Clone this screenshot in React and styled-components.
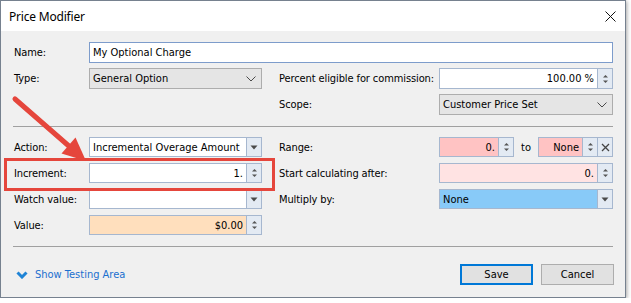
import React from 'react';
import styled, { createGlobalStyle } from 'styled-components';

const Global = createGlobalStyle`
  html, body { margin: 0; padding: 0; background: #ffffff; }
  body {
    font-family: "DejaVu Sans Condensed", "DejaVu Sans", sans-serif;
    font-size: 11px;
    color: #000;
  }
  * { box-sizing: border-box; }
`;

const Window = styled.div`
  position: relative;
  width: 626px;
  height: 298px;
  border: 1px solid #76818f;
  background: #f0f0f0;
  box-shadow: 1px 1px 4px rgba(0, 0, 0, 0.35);
  display: flex;
  flex-direction: column;
`;

const TitleBar = styled.div`
  height: 30px;
  flex: none;
  background: #ffffff;
  display: flex;
  align-items: center;
  justify-content: space-between;
  padding: 0 9px 0 8px;
`;

const Title = styled.span`
  font-family: "Noto Sans", "Open Sans", sans-serif;
  font-size: 12px;
  letter-spacing: -0.2px;
  color: #000;
`;

const Body = styled.div`
  flex: 1;
  display: flex;
  flex-direction: column;
  padding: 11px 11px 0 11px;
`;

const Grid = styled.div`
  display: grid;
  grid-template-columns: 77px 173px 177px 174px;
  grid-auto-rows: ${p => p.$rowH}px;
  row-gap: ${p => p.$gap}px;
`;

const Label = styled.div`
  display: flex;
  align-items: center;
  padding-left: ${p => (p.$right ? 17 : 2)}px;
  white-space: nowrap;
  letter-spacing: -0.1px;
`;

const Field = styled.div`
  display: flex;
  align-items: stretch;
  grid-column: ${p => p.$span || 'auto'};
  border: 1px solid ${p => p.$border || '#a6b7cf'};
  background: ${p => p.$bg || '#ffffff'};
  overflow: hidden;
`;

const FieldText = styled.div`
  flex: 1;
  display: flex;
  align-items: center;
  justify-content: ${p => (p.$right ? 'flex-end' : 'flex-start')};
  padding: 0 3px 0 3px;
  white-space: nowrap;
`;

const SideButton = styled.div`
  width: 15px;
  flex: none;
  display: flex;
  align-items: center;
  justify-content: center;
  background: #e3eaf3;
  border-left: 1px solid #a6b7cf;
  color: #4a4a4a;
`;

const Chevron = styled.div`
  width: 20px;
  flex: none;
  display: flex;
  align-items: center;
  justify-content: center;
`;

const Separator = styled.div`
  height: 1px;
  background: #a0a0a0;
  margin: ${p => p.$m};
  flex: none;
`;

const RangeCell = styled.div`
  display: flex;
  align-items: stretch;
`;

const RangeField = styled(Field)`
  width: ${p => (p.$w ? `${p.$w}px` : 'auto')};
  flex: ${p => (p.$w ? 'none' : '1')};
`;

const ToText = styled.div`
  width: 24px;
  display: flex;
  align-items: center;
  justify-content: center;
`;

const Footer = styled.div`
  display: flex;
  align-items: center;
  justify-content: space-between;
  height: 21px;
  margin-top: 17px;
  padding-left: 4px;
`;

const Link = styled.div`
  display: flex;
  align-items: center;
  gap: 7px;
  color: #1b6fcf;
`;

const Buttons = styled.div`
  display: flex;
  gap: 8px;
  height: 21px;
`;

const Button = styled.div`
  width: 73px;
  display: flex;
  align-items: center;
  justify-content: center;
  background: #e1e1e1;
  border: ${p => (p.$primary ? '2px solid #0078d7' : '1px solid #adadad')};
`;

const Highlight = styled.div`
  position: absolute;
  left: 3px;
  top: 157px;
  width: 271px;
  height: 33px;
  border: 3px solid #e5463c;
  pointer-events: none;
`;

const ArrowLayer = styled.svg`
  position: absolute;
  left: -1px;
  top: -1px;
  pointer-events: none;
  overflow: visible;
`;

const SpinGlyph = () => (
  <svg width="7" height="12" viewBox="0 0 7 12">
    <path d="M1 4.5 L3.5 2 L6 4.5 Z" fill="#555" />
    <path d="M1 7.5 L3.5 10 L6 7.5 Z" fill="#555" />
  </svg>
);

const DropGlyph = () => (
  <svg width="8" height="5" viewBox="0 0 8 5">
    <path d="M0.5 0.5 L7.5 0.5 L4 4.5 Z" fill="#4a4a4a" />
  </svg>
);

const ChevronGlyph = () => (
  <svg width="10" height="6" viewBox="0 0 10 6">
    <path d="M0.5 0.5 L5 5 L9.5 0.5" fill="none" stroke="#4a4a4a" strokeWidth="1" />
  </svg>
);

const CloseGlyph = () => (
  <svg width="11" height="11" viewBox="0 0 11 11">
    <path d="M0.5 0.5 L10.5 10.5 M10.5 0.5 L0.5 10.5" stroke="#111" strokeWidth="1" />
  </svg>
);

const SmallX = () => (
  <svg width="9" height="9" viewBox="0 0 9 9">
    <path d="M1 1 L8 8 M8 1 L1 8" stroke="#444" strokeWidth="1.3" />
  </svg>
);

const DownChevron = () => (
  <svg width="12" height="8" viewBox="0 0 12 8">
    <path d="M1.5 1.5 L6 6 L10.5 1.5" fill="none" stroke="#1f84d6" strokeWidth="3" strokeLinejoin="miter" />
  </svg>
);

const Spin = ({ value, bg, span }) => (
  <Field $bg={bg} $span={span}>
    <FieldText $right>{value}</FieldText>
    <SideButton><SpinGlyph /></SideButton>
  </Field>
);

const Combo = ({ value, bg }) => (
  <Field $bg={bg}>
    <FieldText>{value}</FieldText>
    <SideButton><DropGlyph /></SideButton>
  </Field>
);

const Select = ({ value, span }) => (
  <Field $bg="#e5e5e5" $border="#adadad" $span={span}>
    <FieldText>{value}</FieldText>
    <Chevron><ChevronGlyph /></Chevron>
  </Field>
);

export default function App() {
  return (
    <>
      <Global />
      <Window>
        <TitleBar>
          <Title>Price Modifier</Title>
          <CloseGlyph />
        </TitleBar>
        <Body>
          <Grid $rowH={21} $gap={5}>
            <Label>Name:</Label>
            <Field $span="2 / 5" $border="#7d9ccb">
              <FieldText>My Optional Charge</FieldText>
            </Field>

            <Label>Type:</Label>
            <Select value="General Option" />
            <Label $right>Percent eligible for commission:</Label>
            <Spin value="100.00 %" />

            <div />
            <div />
            <Label $right>Scope:</Label>
            <Select value="Customer Price Set" />
          </Grid>

          <Separator $m="11px 1px 10px 1px" />

          <Grid $rowH={20} $gap={6}>
            <Label>Action:</Label>
            <Combo value="Incremental Overage Amount" />
            <Label $right>Range:</Label>
            <RangeCell>
              <RangeField $bg="#ffc3c3" $w={75}>
                <FieldText $right>0.</FieldText>
                <SideButton><SpinGlyph /></SideButton>
              </RangeField>
              <ToText>to</ToText>
              <RangeField $bg="#ffc3c3">
                <FieldText $right>None</FieldText>
                <SideButton><SpinGlyph /></SideButton>
                <SideButton><SmallX /></SideButton>
              </RangeField>
            </RangeCell>

            <Label>Increment:</Label>
            <Spin value="1." />
            <Label $right>Start calculating after:</Label>
            <Spin value="0." bg="#ffe3e3" />

            <Label>Watch value:</Label>
            <Combo value="" />
            <Label $right>Multiply by:</Label>
            <Combo value="None" bg="#88caf8" />

            <Label>Value:</Label>
            <Spin value="$0.00" bg="#ffdfbd" />
            <div />
            <div />
          </Grid>

          <Separator $m="11px 1px 0 1px" />

          <Footer>
            <Link>
              <DownChevron />
              <span>Show Testing Area</span>
            </Link>
            <Buttons>
              <Button $primary>Save</Button>
              <Button>Cancel</Button>
            </Buttons>
          </Footer>
        </Body>

        <Highlight />
        <ArrowLayer width="631" height="303">
          <line x1="15" y1="99" x2="70" y2="147" stroke="#e5463c" strokeWidth="5" strokeLinecap="round" />
          <polygon points="86,161 61.5,153.5 75.5,137.5" fill="#e5463c" />
        </ArrowLayer>
      </Window>
    </>
  );
}
